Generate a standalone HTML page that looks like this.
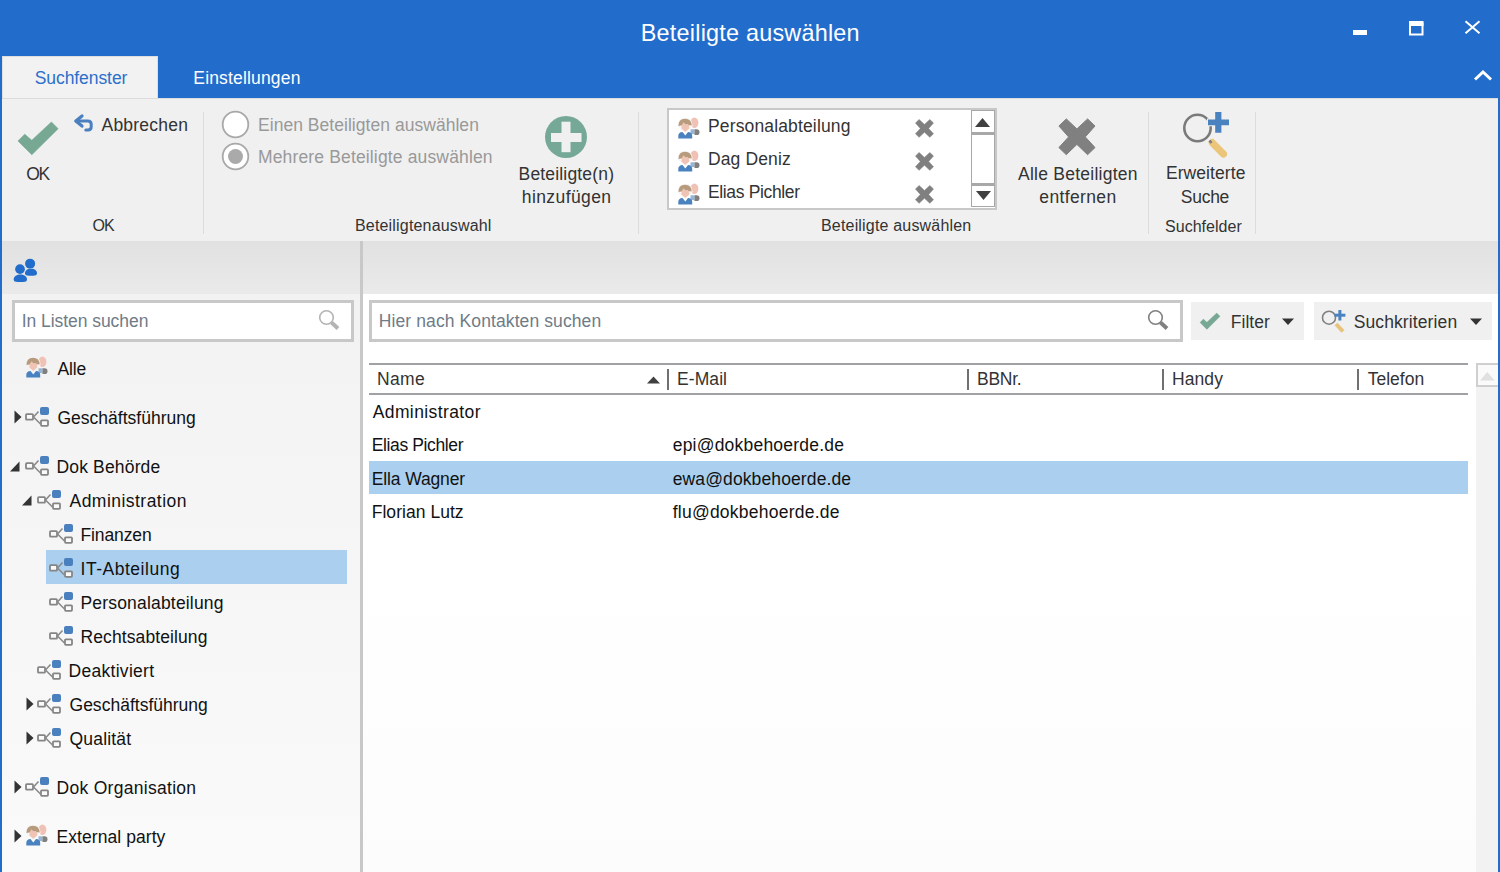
<!DOCTYPE html>
<html><head><meta charset="utf-8"><style>
html,body{margin:0;padding:0;}
body{width:1500px;height:872px;overflow:hidden;position:relative;background:#fff;font-family:"Liberation Sans",sans-serif;}
.t{position:absolute;white-space:nowrap;line-height:20px;}
svg{overflow:visible}
</style></head><body>
<div style="position:absolute;left:0px;top:0px;width:1500px;height:98px;background:#226dcc"></div>
<div class="t" style="left:640.80px;top:22.9px;font-size:23.4px;color:#fff;letter-spacing:0.221px;">Beteiligte auswählen</div>
<div style="position:absolute;left:1353px;top:30px;width:14px;height:5px;background:#fff"></div>
<svg style="position:absolute;left:1409px;top:21px" width="14.5" height="14.5" viewBox="0 0 14.5 14.5"><rect x="1" y="2.5" width="12.5" height="11" fill="none" stroke="#fff" stroke-width="2"/><rect x="0" y="0" width="14.5" height="5" fill="#fff"/></svg>
<svg style="position:absolute;left:1464px;top:20px" width="17" height="15" viewBox="0 0 17 15"><path d="M1.5 1.2 L15.5 13.2 M15.5 1.2 L1.5 13.2" stroke="#fff" stroke-width="2"/></svg>
<svg style="position:absolute;left:1473px;top:69px" width="20" height="13" viewBox="0 0 20 13"><path d="M2 10.5 L10 3 L18 10.5" fill="none" stroke="#fff" stroke-width="3"/></svg>
<div style="position:absolute;left:2px;top:56px;width:156px;height:42px;background:#f2f2f2;box-sizing:border-box;border:1.5px solid #dedede;border-bottom:none"></div>
<div class="t" style="left:34.70px;top:67.6px;font-size:17.5px;color:#2b6fcb;letter-spacing:-0.070px;">Suchfenster</div>
<div class="t" style="left:193.30px;top:67.9px;font-size:17.5px;color:#fff;letter-spacing:0.167px;">Einstellungen</div>
<div style="position:absolute;left:2px;top:98px;width:1496px;height:143px;background:#f0f0f0;box-sizing:border-box;border-top:1.5px solid #dcdcdc"></div>
<div style="position:absolute;left:203px;top:112px;width:1px;height:122px;background:#dcdcdc"></div>
<div style="position:absolute;left:638px;top:112px;width:1px;height:122px;background:#dcdcdc"></div>
<div style="position:absolute;left:1148px;top:112px;width:1px;height:122px;background:#dcdcdc"></div>
<div style="position:absolute;left:1255px;top:112px;width:1px;height:122px;background:#dcdcdc"></div>
<svg style="position:absolute;left:8px;top:111.5px" width="56" height="48" viewBox="0 0 56 48"><g transform="scale(2)"><polygon points="4.98,14.47 8.36,11.09 11.9,14.15 21.7,4.98 25.08,8.36 11.9,21.38" fill="#76a894" stroke="#76a894" stroke-width="0.3" stroke-linejoin="round"/></g></svg>
<div class="t" style="left:26.20px;top:163.9px;font-size:17.5px;color:#333;letter-spacing:-1.300px;">OK</div>
<svg style="position:absolute;left:70px;top:110px" width="26" height="24" viewBox="0 0 26 24"><path d="M6 11 H17.8 Q21.2 11 21.2 14.2 V16.8 Q21.2 20 18 20 H15.8" fill="none" stroke="#4a7fc0" stroke-width="3" stroke-linecap="round"/><path d="M12 5.9 L5.9 11 L12 16.1" fill="none" stroke="#4a7fc0" stroke-width="3.2" stroke-linecap="round" stroke-linejoin="round"/></svg>
<div class="t" style="left:101.50px;top:114.9px;font-size:17.5px;color:#333;letter-spacing:0.225px;">Abbrechen</div>
<div class="t" style="left:92.40px;top:216.2px;font-size:16px;color:#333;letter-spacing:-0.900px;">OK</div>
<svg style="position:absolute;left:221px;top:110px" width="29" height="29" viewBox="0 0 29 29"><circle cx="14.5" cy="14.5" r="12.8" fill="#fff" stroke="#a8a8a8" stroke-width="1.8"/></svg>
<svg style="position:absolute;left:221px;top:142px" width="29" height="29" viewBox="0 0 29 29"><circle cx="14.5" cy="14.5" r="12.8" fill="#fff" stroke="#a8a8a8" stroke-width="1.8"/><circle cx="14.5" cy="14.5" r="7.5" fill="#aaaaaa"/></svg>
<div class="t" style="left:258.00px;top:114.9px;font-size:17.5px;color:#999;letter-spacing:0.038px;">Einen Beteiligten auswählen</div>
<div class="t" style="left:258.00px;top:146.9px;font-size:17.5px;color:#999;letter-spacing:0.148px;">Mehrere Beteiligte auswählen</div>
<div class="t" style="left:355.00px;top:216.2px;font-size:16px;color:#333;letter-spacing:0.176px;">Beteiligtenauswahl</div>
<svg style="position:absolute;left:545px;top:116px" width="42" height="42" viewBox="0 0 42 42"><circle cx="21" cy="21" r="21" fill="#76a898"/><rect x="16.5" y="5.7" width="9" height="30.5" fill="#f0f0f0"/><rect x="6" y="17" width="30.5" height="9" fill="#f0f0f0"/></svg>
<div class="t" style="left:518.60px;top:163.7px;font-size:17.5px;color:#333;letter-spacing:0.167px;">Beteiligte(n)</div>
<div class="t" style="left:521.80px;top:187.4px;font-size:17.5px;color:#333;letter-spacing:0.400px;">hinzufügen</div>
<div style="position:absolute;left:667px;top:108px;width:330px;height:102px;background:#fff;box-sizing:border-box;border:2px solid #c8c8c8"></div>
<svg style="position:absolute;left:674px;top:113px" width="28" height="28" viewBox="0 0 28 28"><ellipse cx="20.4" cy="9.7" rx="4" ry="5.2" fill="#f0c2b6"/><path d="M16.5 16.3 h4 v4.8 h-4z" fill="#94b4d8"/><path d="M20.5 16.3 h2 a3 2.85 0 0 1 0 5.7 h-2z" fill="#7f7f7f"/><path d="M4.5 13 Q4.5 5.5 11 5.5 Q17.8 5.5 17.8 12.8 L17.8 13 L15 15.5 L11.3 18.8 L7.5 15.5 L4.5 13z" fill="none" stroke="#f4f4f4" stroke-width="1.6"/><path d="M4.3 25.5 V23 Q4.3 19.3 8.5 19 L11.3 22.5 L14 19 Q18.2 19.3 18.2 23 V25.5z" fill="#4a82c0"/><path d="M7.5 12 L9.5 9.5 L11.5 11.5 L13 11 L15.2 12.3 L15.2 15.5 L11.3 18.8 L7.4 15.5z" fill="#f0c4b4"/><path d="M4.5 13 Q4.5 5.8 11 5.8 Q17.6 5.8 17.6 12.6 L15.2 12.3 L13 11 L11.5 11.5 L9.5 9.5 L7.5 12.5z" fill="#b89a7c"/></svg>
<div class="t" style="left:708.00px;top:115.9px;font-size:17.5px;color:#333;letter-spacing:0.144px;">Personalabteilung</div>
<svg style="position:absolute;left:911.5px;top:115.5px" width="25" height="25" viewBox="0 0 25 25"><g transform="scale(0.5)"><polygon points="14.3,6.9 6.9,14.0 16.6,24.9 6.9,35.6 14.3,42.7 24.9,32.4 35.6,42.7 43,35.6 33.3,24.9 43,14.0 35.6,6.9 24.9,16.9" fill="#808080" stroke="#808080" stroke-width="1" stroke-linejoin="round"/></g></svg>
<svg style="position:absolute;left:674px;top:146px" width="28" height="28" viewBox="0 0 28 28"><ellipse cx="20.4" cy="9.7" rx="4" ry="5.2" fill="#f0c2b6"/><path d="M16.5 16.3 h4 v4.8 h-4z" fill="#94b4d8"/><path d="M20.5 16.3 h2 a3 2.85 0 0 1 0 5.7 h-2z" fill="#7f7f7f"/><path d="M4.5 13 Q4.5 5.5 11 5.5 Q17.8 5.5 17.8 12.8 L17.8 13 L15 15.5 L11.3 18.8 L7.5 15.5 L4.5 13z" fill="none" stroke="#f4f4f4" stroke-width="1.6"/><path d="M4.3 25.5 V23 Q4.3 19.3 8.5 19 L11.3 22.5 L14 19 Q18.2 19.3 18.2 23 V25.5z" fill="#4a82c0"/><path d="M7.5 12 L9.5 9.5 L11.5 11.5 L13 11 L15.2 12.3 L15.2 15.5 L11.3 18.8 L7.4 15.5z" fill="#f0c4b4"/><path d="M4.5 13 Q4.5 5.8 11 5.8 Q17.6 5.8 17.6 12.6 L15.2 12.3 L13 11 L11.5 11.5 L9.5 9.5 L7.5 12.5z" fill="#b89a7c"/></svg>
<div class="t" style="left:708.00px;top:148.9px;font-size:17.5px;color:#333;letter-spacing:0.125px;">Dag Deniz</div>
<svg style="position:absolute;left:911.5px;top:148.5px" width="25" height="25" viewBox="0 0 25 25"><g transform="scale(0.5)"><polygon points="14.3,6.9 6.9,14.0 16.6,24.9 6.9,35.6 14.3,42.7 24.9,32.4 35.6,42.7 43,35.6 33.3,24.9 43,14.0 35.6,6.9 24.9,16.9" fill="#808080" stroke="#808080" stroke-width="1" stroke-linejoin="round"/></g></svg>
<svg style="position:absolute;left:674px;top:179px" width="28" height="28" viewBox="0 0 28 28"><ellipse cx="20.4" cy="9.7" rx="4" ry="5.2" fill="#f0c2b6"/><path d="M16.5 16.3 h4 v4.8 h-4z" fill="#94b4d8"/><path d="M20.5 16.3 h2 a3 2.85 0 0 1 0 5.7 h-2z" fill="#7f7f7f"/><path d="M4.5 13 Q4.5 5.5 11 5.5 Q17.8 5.5 17.8 12.8 L17.8 13 L15 15.5 L11.3 18.8 L7.5 15.5 L4.5 13z" fill="none" stroke="#f4f4f4" stroke-width="1.6"/><path d="M4.3 25.5 V23 Q4.3 19.3 8.5 19 L11.3 22.5 L14 19 Q18.2 19.3 18.2 23 V25.5z" fill="#4a82c0"/><path d="M7.5 12 L9.5 9.5 L11.5 11.5 L13 11 L15.2 12.3 L15.2 15.5 L11.3 18.8 L7.4 15.5z" fill="#f0c4b4"/><path d="M4.5 13 Q4.5 5.8 11 5.8 Q17.6 5.8 17.6 12.6 L15.2 12.3 L13 11 L11.5 11.5 L9.5 9.5 L7.5 12.5z" fill="#b89a7c"/></svg>
<div class="t" style="left:708.00px;top:181.9px;font-size:17.5px;color:#333;letter-spacing:-0.358px;">Elias Pichler</div>
<svg style="position:absolute;left:911.5px;top:181.5px" width="25" height="25" viewBox="0 0 25 25"><g transform="scale(0.5)"><polygon points="14.3,6.9 6.9,14.0 16.6,24.9 6.9,35.6 14.3,42.7 24.9,32.4 35.6,42.7 43,35.6 33.3,24.9 43,14.0 35.6,6.9 24.9,16.9" fill="#808080" stroke="#808080" stroke-width="1" stroke-linejoin="round"/></g></svg>
<div style="position:absolute;left:971px;top:110px;width:24px;height:24px;background:#fff;box-sizing:border-box;border:1px solid #a8a8a8;border-bottom-width:2px"></div>
<div style="position:absolute;left:971px;top:134px;width:24px;height:50px;background:#fff;box-sizing:border-box;border:1px solid #a8a8a8"></div>
<div style="position:absolute;left:971px;top:184px;width:24px;height:23px;background:#fff;box-sizing:border-box;border:1px solid #a8a8a8;border-top-width:2px"></div>
<svg style="position:absolute;left:975px;top:117px" width="16" height="11" viewBox="0 0 16 11"><path d="M0 10 L7.5 1 L15 10z" fill="#404040"/></svg>
<svg style="position:absolute;left:976px;top:191px" width="16" height="10" viewBox="0 0 16 10"><path d="M0 0 L15 0 L7.5 9z" fill="#404040"/></svg>
<div class="t" style="left:821.00px;top:216.2px;font-size:16px;color:#333;letter-spacing:0.179px;">Beteiligte auswählen</div>
<svg style="position:absolute;left:1052px;top:112px" width="50" height="50" viewBox="0 0 50 50"><polygon points="14.3,6.9 6.9,14.0 16.6,24.9 6.9,35.6 14.3,42.7 24.9,32.4 35.6,42.7 43,35.6 33.3,24.9 43,14.0 35.6,6.9 24.9,16.9" fill="#808080" stroke="#808080" stroke-width="1" stroke-linejoin="round"/></svg>
<div class="t" style="left:1018.00px;top:163.7px;font-size:17.5px;color:#333;letter-spacing:0.253px;">Alle Beteiligten</div>
<div class="t" style="left:1039.30px;top:187.4px;font-size:17.5px;color:#333;letter-spacing:0.363px;">entfernen</div>
<svg style="position:absolute;left:1180px;top:110px" width="52" height="50" viewBox="0 0 52 50"><circle cx="17.5" cy="18" r="13.2" fill="none" stroke="#7a7a7a" stroke-width="2.6"/><path d="M32.3 32.7 L43.4 44" stroke="#ebc67a" stroke-width="7.3" stroke-linecap="round"/><path d="M29.5 30.5 L31.5 33" stroke="#7a7a7a" stroke-width="2.5"/><path d="M35.2 1.9 h6.2 v7.5 h7.6 v5.9 h-7.6 v7.5 h-6.2 v-7.5 h-7.2 v-5.9 h7.2z" fill="#4a82c0" stroke="#f0f0f0" stroke-width="2" paint-order="stroke"/></svg>
<div class="t" style="left:1165.90px;top:162.6px;font-size:17.5px;color:#333;letter-spacing:0.089px;">Erweiterte</div>
<div class="t" style="left:1180.80px;top:186.6px;font-size:17.5px;color:#333;letter-spacing:-0.275px;">Suche</div>
<div class="t" style="left:1165.00px;top:216.5px;font-size:16px;color:#333;letter-spacing:0.033px;">Suchfelder</div>
<div style="position:absolute;left:2px;top:241px;width:358px;height:53px;background:linear-gradient(#e1e1e1,#eaeaea)"></div>
<div style="position:absolute;left:2px;top:294px;width:358px;height:578px;background:linear-gradient(#f2f2f2,#fafafa)"></div>
<div style="position:absolute;left:360px;top:241px;width:3px;height:631px;background:#c8c8c8"></div>
<div style="position:absolute;left:363px;top:241px;width:1135px;height:53px;background:linear-gradient(#e1e1e1,#eaeaea)"></div>
<div style="position:absolute;left:363px;top:294px;width:1135px;height:578px;background:linear-gradient(#fff 40%,#fcfcfc)"></div>
<div style="position:absolute;left:0px;top:98px;width:2px;height:774px;background:#226dcc"></div>
<div style="position:absolute;left:1498px;top:98px;width:2px;height:774px;background:#226dcc"></div>
<svg style="position:absolute;left:13px;top:258px" width="28" height="28" viewBox="0 0 28 28"><path d="M12 15.3 C12 8.9 24 8.9 24 15.3 Q24 17.8 20 17.8 H16 Q12 17.8 12 15.3Z" fill="#226dcc"/><circle cx="17.1" cy="5.65" r="5" fill="#226dcc" stroke="#e4e4e4" stroke-width="1" paint-order="stroke"/><circle cx="7" cy="11.15" r="4.85" fill="#226dcc" stroke="#e4e4e4" stroke-width="1.2" paint-order="stroke"/><path d="M0.7 21.4 C0.7 15.0 14 15.0 14 21.4 Q14 23.9 10 23.9 H4.7 Q0.7 23.9 0.7 21.4Z" fill="#226dcc" stroke="#e5e5e5" stroke-width="1.2" paint-order="stroke"/></svg>
<div style="position:absolute;left:12px;top:300px;width:342px;height:42px;background:#fff;box-sizing:border-box;border:3px solid #c8c8c8"></div>
<div class="t" style="left:21.70px;top:310.9px;font-size:17.5px;color:#6f7b87;letter-spacing:-0.047px;">In Listen suchen</div>
<svg style="position:absolute;left:318px;top:309px" width="24" height="24" viewBox="0 0 24 24"><circle cx="8.5" cy="8.5" r="6.8" fill="none" stroke="#b4b4b4" stroke-width="1.6"/><path d="M13.5 13.5 L20 19.5" stroke="#b4b4b4" stroke-width="4"/></svg>
<div style="position:absolute;left:46px;top:550px;width:301px;height:34px;background:#aacfef"></div>
<svg style="position:absolute;left:22px;top:352.4px" width="28" height="28" viewBox="0 0 28 28"><ellipse cx="20.4" cy="9.7" rx="4" ry="5.2" fill="#f0c2b6"/><path d="M16.5 16.3 h4 v4.8 h-4z" fill="#94b4d8"/><path d="M20.5 16.3 h2 a3 2.85 0 0 1 0 5.7 h-2z" fill="#7f7f7f"/><path d="M4.5 13 Q4.5 5.5 11 5.5 Q17.8 5.5 17.8 12.8 L17.8 13 L15 15.5 L11.3 18.8 L7.5 15.5 L4.5 13z" fill="none" stroke="#f4f4f4" stroke-width="1.6"/><path d="M4.3 25.5 V23 Q4.3 19.3 8.5 19 L11.3 22.5 L14 19 Q18.2 19.3 18.2 23 V25.5z" fill="#4a82c0"/><path d="M7.5 12 L9.5 9.5 L11.5 11.5 L13 11 L15.2 12.3 L15.2 15.5 L11.3 18.8 L7.4 15.5z" fill="#f0c4b4"/><path d="M4.5 13 Q4.5 5.8 11 5.8 Q17.6 5.8 17.6 12.6 L15.2 12.3 L13 11 L11.5 11.5 L9.5 9.5 L7.5 12.5z" fill="#b89a7c"/></svg>
<div class="t" style="left:57.50px;top:358.9px;font-size:17.5px;color:#111;letter-spacing:-0.133px;">Alle</div>
<svg style="position:absolute;left:25px;top:407px" width="25" height="21" viewBox="0 0 25 21"><rect x="15" y="0" width="9" height="8" rx="2" fill="#4a80bd"/><rect x="1" y="7.2" width="7" height="5.5" rx="0.8" fill="#fafafa" stroke="#858585" stroke-width="1.8"/><rect x="16" y="13.3" width="7" height="5.6" rx="0.8" fill="#fafafa" stroke="#858585" stroke-width="1.8"/><path d="M8.5 10 L13.5 4.5 M8.5 10 L15.5 17" stroke="#8a8a8a" stroke-width="1.6"/></svg>
<svg style="position:absolute;left:13.5px;top:410px" width="8" height="14" viewBox="0 0 8 14"><path d="M0.5 0.5 L7.5 7 L0.5 13.5z" fill="#333"/></svg>
<div class="t" style="left:57.50px;top:407.9px;font-size:17.5px;color:#111;letter-spacing:0.007px;">Geschäftsführung</div>
<svg style="position:absolute;left:25px;top:456px" width="25" height="21" viewBox="0 0 25 21"><rect x="15" y="0" width="9" height="8" rx="2" fill="#4a80bd"/><rect x="1" y="7.2" width="7" height="5.5" rx="0.8" fill="#fafafa" stroke="#858585" stroke-width="1.8"/><rect x="16" y="13.3" width="7" height="5.6" rx="0.8" fill="#fafafa" stroke="#858585" stroke-width="1.8"/><path d="M8.5 10 L13.5 4.5 M8.5 10 L15.5 17" stroke="#8a8a8a" stroke-width="1.6"/></svg>
<svg style="position:absolute;left:10px;top:460.5px" width="10" height="11" viewBox="0 0 10 11"><path d="M9.5 0.5 L9.5 10.5 L0 10.5z" fill="#333"/></svg>
<div class="t" style="left:56.50px;top:456.9px;font-size:17.5px;color:#111;letter-spacing:0.160px;">Dok Behörde</div>
<svg style="position:absolute;left:37px;top:490px" width="25" height="21" viewBox="0 0 25 21"><rect x="15" y="0" width="9" height="8" rx="2" fill="#4a80bd"/><rect x="1" y="7.2" width="7" height="5.5" rx="0.8" fill="#fafafa" stroke="#858585" stroke-width="1.8"/><rect x="16" y="13.3" width="7" height="5.6" rx="0.8" fill="#fafafa" stroke="#858585" stroke-width="1.8"/><path d="M8.5 10 L13.5 4.5 M8.5 10 L15.5 17" stroke="#8a8a8a" stroke-width="1.6"/></svg>
<svg style="position:absolute;left:22px;top:494.5px" width="10" height="11" viewBox="0 0 10 11"><path d="M9.5 0.5 L9.5 10.5 L0 10.5z" fill="#333"/></svg>
<div class="t" style="left:69.50px;top:490.9px;font-size:17.5px;color:#111;letter-spacing:0.469px;">Administration</div>
<svg style="position:absolute;left:49px;top:524px" width="25" height="21" viewBox="0 0 25 21"><rect x="15" y="0" width="9" height="8" rx="2" fill="#4a80bd"/><rect x="1" y="7.2" width="7" height="5.5" rx="0.8" fill="#fafafa" stroke="#858585" stroke-width="1.8"/><rect x="16" y="13.3" width="7" height="5.6" rx="0.8" fill="#fafafa" stroke="#858585" stroke-width="1.8"/><path d="M8.5 10 L13.5 4.5 M8.5 10 L15.5 17" stroke="#8a8a8a" stroke-width="1.6"/></svg>
<div class="t" style="left:80.50px;top:524.9px;font-size:17.5px;color:#111;letter-spacing:-0.114px;">Finanzen</div>
<svg style="position:absolute;left:49px;top:558px" width="25" height="21" viewBox="0 0 25 21"><rect x="15" y="0" width="9" height="8" rx="2" fill="#4a80bd"/><rect x="1" y="7.2" width="7" height="5.5" rx="0.8" fill="#fafafa" stroke="#858585" stroke-width="1.8"/><rect x="16" y="13.3" width="7" height="5.6" rx="0.8" fill="#fafafa" stroke="#858585" stroke-width="1.8"/><path d="M8.5 10 L13.5 4.5 M8.5 10 L15.5 17" stroke="#8a8a8a" stroke-width="1.6"/></svg>
<div class="t" style="left:80.50px;top:558.9px;font-size:17.5px;color:#111;letter-spacing:0.527px;">IT-Abteilung</div>
<svg style="position:absolute;left:49px;top:592px" width="25" height="21" viewBox="0 0 25 21"><rect x="15" y="0" width="9" height="8" rx="2" fill="#4a80bd"/><rect x="1" y="7.2" width="7" height="5.5" rx="0.8" fill="#fafafa" stroke="#858585" stroke-width="1.8"/><rect x="16" y="13.3" width="7" height="5.6" rx="0.8" fill="#fafafa" stroke="#858585" stroke-width="1.8"/><path d="M8.5 10 L13.5 4.5 M8.5 10 L15.5 17" stroke="#8a8a8a" stroke-width="1.6"/></svg>
<div class="t" style="left:80.50px;top:592.9px;font-size:17.5px;color:#111;letter-spacing:0.181px;">Personalabteilung</div>
<svg style="position:absolute;left:49px;top:626px" width="25" height="21" viewBox="0 0 25 21"><rect x="15" y="0" width="9" height="8" rx="2" fill="#4a80bd"/><rect x="1" y="7.2" width="7" height="5.5" rx="0.8" fill="#fafafa" stroke="#858585" stroke-width="1.8"/><rect x="16" y="13.3" width="7" height="5.6" rx="0.8" fill="#fafafa" stroke="#858585" stroke-width="1.8"/><path d="M8.5 10 L13.5 4.5 M8.5 10 L15.5 17" stroke="#8a8a8a" stroke-width="1.6"/></svg>
<div class="t" style="left:80.50px;top:626.9px;font-size:17.5px;color:#111;letter-spacing:0.100px;">Rechtsabteilung</div>
<svg style="position:absolute;left:37px;top:660px" width="25" height="21" viewBox="0 0 25 21"><rect x="15" y="0" width="9" height="8" rx="2" fill="#4a80bd"/><rect x="1" y="7.2" width="7" height="5.5" rx="0.8" fill="#fafafa" stroke="#858585" stroke-width="1.8"/><rect x="16" y="13.3" width="7" height="5.6" rx="0.8" fill="#fafafa" stroke="#858585" stroke-width="1.8"/><path d="M8.5 10 L13.5 4.5 M8.5 10 L15.5 17" stroke="#8a8a8a" stroke-width="1.6"/></svg>
<div class="t" style="left:68.50px;top:660.9px;font-size:17.5px;color:#111;letter-spacing:0.290px;">Deaktiviert</div>
<svg style="position:absolute;left:37px;top:694px" width="25" height="21" viewBox="0 0 25 21"><rect x="15" y="0" width="9" height="8" rx="2" fill="#4a80bd"/><rect x="1" y="7.2" width="7" height="5.5" rx="0.8" fill="#fafafa" stroke="#858585" stroke-width="1.8"/><rect x="16" y="13.3" width="7" height="5.6" rx="0.8" fill="#fafafa" stroke="#858585" stroke-width="1.8"/><path d="M8.5 10 L13.5 4.5 M8.5 10 L15.5 17" stroke="#8a8a8a" stroke-width="1.6"/></svg>
<svg style="position:absolute;left:25.5px;top:697px" width="8" height="14" viewBox="0 0 8 14"><path d="M0.5 0.5 L7.5 7 L0.5 13.5z" fill="#333"/></svg>
<div class="t" style="left:69.50px;top:694.9px;font-size:17.5px;color:#111;letter-spacing:0.013px;">Geschäftsführung</div>
<svg style="position:absolute;left:37px;top:728px" width="25" height="21" viewBox="0 0 25 21"><rect x="15" y="0" width="9" height="8" rx="2" fill="#4a80bd"/><rect x="1" y="7.2" width="7" height="5.5" rx="0.8" fill="#fafafa" stroke="#858585" stroke-width="1.8"/><rect x="16" y="13.3" width="7" height="5.6" rx="0.8" fill="#fafafa" stroke="#858585" stroke-width="1.8"/><path d="M8.5 10 L13.5 4.5 M8.5 10 L15.5 17" stroke="#8a8a8a" stroke-width="1.6"/></svg>
<svg style="position:absolute;left:25.5px;top:731px" width="8" height="14" viewBox="0 0 8 14"><path d="M0.5 0.5 L7.5 7 L0.5 13.5z" fill="#333"/></svg>
<div class="t" style="left:69.50px;top:728.9px;font-size:17.5px;color:#111;letter-spacing:0.186px;">Qualität</div>
<svg style="position:absolute;left:25px;top:777px" width="25" height="21" viewBox="0 0 25 21"><rect x="15" y="0" width="9" height="8" rx="2" fill="#4a80bd"/><rect x="1" y="7.2" width="7" height="5.5" rx="0.8" fill="#fafafa" stroke="#858585" stroke-width="1.8"/><rect x="16" y="13.3" width="7" height="5.6" rx="0.8" fill="#fafafa" stroke="#858585" stroke-width="1.8"/><path d="M8.5 10 L13.5 4.5 M8.5 10 L15.5 17" stroke="#8a8a8a" stroke-width="1.6"/></svg>
<svg style="position:absolute;left:13.5px;top:780px" width="8" height="14" viewBox="0 0 8 14"><path d="M0.5 0.5 L7.5 7 L0.5 13.5z" fill="#333"/></svg>
<div class="t" style="left:56.50px;top:777.9px;font-size:17.5px;color:#111;letter-spacing:0.293px;">Dok Organisation</div>
<svg style="position:absolute;left:22px;top:820.4px" width="28" height="28" viewBox="0 0 28 28"><ellipse cx="20.4" cy="9.7" rx="4" ry="5.2" fill="#f0c2b6"/><path d="M16.5 16.3 h4 v4.8 h-4z" fill="#94b4d8"/><path d="M20.5 16.3 h2 a3 2.85 0 0 1 0 5.7 h-2z" fill="#7f7f7f"/><path d="M4.5 13 Q4.5 5.5 11 5.5 Q17.8 5.5 17.8 12.8 L17.8 13 L15 15.5 L11.3 18.8 L7.5 15.5 L4.5 13z" fill="none" stroke="#f4f4f4" stroke-width="1.6"/><path d="M4.3 25.5 V23 Q4.3 19.3 8.5 19 L11.3 22.5 L14 19 Q18.2 19.3 18.2 23 V25.5z" fill="#4a82c0"/><path d="M7.5 12 L9.5 9.5 L11.5 11.5 L13 11 L15.2 12.3 L15.2 15.5 L11.3 18.8 L7.4 15.5z" fill="#f0c4b4"/><path d="M4.5 13 Q4.5 5.8 11 5.8 Q17.6 5.8 17.6 12.6 L15.2 12.3 L13 11 L11.5 11.5 L9.5 9.5 L7.5 12.5z" fill="#b89a7c"/></svg>
<svg style="position:absolute;left:13.5px;top:829px" width="8" height="14" viewBox="0 0 8 14"><path d="M0.5 0.5 L7.5 7 L0.5 13.5z" fill="#333"/></svg>
<div class="t" style="left:56.50px;top:826.9px;font-size:17.5px;color:#111;letter-spacing:0.069px;">External party</div>
<div style="position:absolute;left:369px;top:300px;width:814px;height:42px;background:#fff;box-sizing:border-box;border:3px solid #c8c8c8"></div>
<div class="t" style="left:378.80px;top:311.3px;font-size:17.5px;color:#6f7b87;letter-spacing:0.100px;">Hier nach Kontakten suchen</div>
<svg style="position:absolute;left:1147px;top:309px" width="24" height="24" viewBox="0 0 24 24"><circle cx="8.5" cy="8.5" r="6.8" fill="none" stroke="#808080" stroke-width="1.6"/><path d="M13.5 13.5 L20 19.5" stroke="#808080" stroke-width="4"/></svg>
<div style="position:absolute;left:1191px;top:302px;width:113px;height:38px;background:#f0f0f0"></div>
<svg style="position:absolute;left:1195px;top:308px" width="28" height="26" viewBox="0 0 28 26"><polygon points="4.98,14.47 8.36,11.09 11.9,14.15 21.7,4.98 25.08,8.36 11.9,21.38" fill="#76a894" stroke="#76a894" stroke-width="0.3" stroke-linejoin="round"/></svg>
<div class="t" style="left:1230.70px;top:311.9px;font-size:17.5px;color:#333;letter-spacing:0.060px;">Filter</div>
<svg style="position:absolute;left:1282px;top:318px" width="13" height="8" viewBox="0 0 13 8"><path d="M0 0.5 H12 L6 7z" fill="#333"/></svg>
<div style="position:absolute;left:1314px;top:302px;width:178px;height:38px;background:#f0f0f0"></div>
<svg style="position:absolute;left:1320px;top:307.5px" width="28" height="26" viewBox="0 0 28 26"><circle cx="9" cy="9.7" r="6.5" fill="none" stroke="#808080" stroke-width="1.6"/><path d="M16 16 L23 23.5" stroke="#e8c47a" stroke-width="4"/><rect x="18.4" y="2" width="3" height="10.5" fill="#4a82c0"/><rect x="14.4" y="5.7" width="11" height="3" fill="#4a82c0"/></svg>
<div class="t" style="left:1353.70px;top:311.9px;font-size:17.5px;color:#333;letter-spacing:0.108px;">Suchkriterien</div>
<svg style="position:absolute;left:1470px;top:318px" width="13" height="8" viewBox="0 0 13 8"><path d="M0 0.5 H12 L6 7z" fill="#333"/></svg>
<div style="position:absolute;left:369px;top:363px;width:1099px;height:2px;background:#a0a0a5"></div>
<div style="position:absolute;left:369px;top:393px;width:1099px;height:2px;background:#a0a0a5"></div>
<div class="t" style="left:376.90px;top:368.6px;font-size:17.5px;color:#333;letter-spacing:0.367px;">Name</div>
<svg style="position:absolute;left:647px;top:376px" width="14" height="8" viewBox="0 0 14 8"><path d="M0 7.5 L6.5 0.5 L13 7.5z" fill="#404040"/></svg>
<div style="position:absolute;left:667px;top:369px;width:2px;height:21px;background:#707070"></div>
<div class="t" style="left:677.00px;top:368.7px;font-size:17.5px;color:#333;letter-spacing:0.080px;">E-Mail</div>
<div style="position:absolute;left:967px;top:369px;width:2px;height:21px;background:#707070"></div>
<div class="t" style="left:977.00px;top:368.7px;font-size:17.5px;color:#333;letter-spacing:-0.250px;">BBNr.</div>
<div style="position:absolute;left:1162px;top:369px;width:2px;height:21px;background:#707070"></div>
<div class="t" style="left:1172.00px;top:368.7px;font-size:17.5px;color:#333;letter-spacing:0.075px;">Handy</div>
<div style="position:absolute;left:1357px;top:369px;width:2px;height:21px;background:#707070"></div>
<div class="t" style="left:1367.70px;top:368.7px;font-size:17.5px;color:#333;letter-spacing:0.000px;">Telefon</div>
<div style="position:absolute;left:1476px;top:363px;width:22px;height:509px;background:#f2f2f2"></div>
<div style="position:absolute;left:1476px;top:363px;width:22px;height:24px;background:#fafafa;box-sizing:border-box;border:2px solid #cfcfcf;border-right:none"></div>
<svg style="position:absolute;left:1480px;top:370.5px" width="15" height="10" viewBox="0 0 15 10"><path d="M0 9.5 L7.3 1 L14.6 9.5z" fill="#e0e0e0"/></svg>
<div style="position:absolute;left:369px;top:461px;width:1099px;height:33px;background:#aacfef"></div>
<div class="t" style="left:372.70px;top:402.2px;font-size:17.5px;color:#111;letter-spacing:0.400px;">Administrator</div>
<div class="t" style="left:371.70px;top:435.4px;font-size:17.5px;color:#111;letter-spacing:-0.367px;">Elias Pichler</div>
<div class="t" style="left:672.70px;top:435.4px;font-size:17.5px;color:#111;letter-spacing:0.212px;">epi@dokbehoerde.de</div>
<div class="t" style="left:371.70px;top:468.6px;font-size:17.5px;color:#111;letter-spacing:-0.120px;">Ella Wagner</div>
<div class="t" style="left:672.70px;top:468.6px;font-size:17.5px;color:#111;letter-spacing:0.118px;">ewa@dokbehoerde.de</div>
<div class="t" style="left:371.70px;top:501.8px;font-size:17.5px;color:#111;letter-spacing:0.045px;">Florian Lutz</div>
<div class="t" style="left:672.70px;top:501.8px;font-size:17.5px;color:#111;letter-spacing:0.235px;">flu@dokbehoerde.de</div>
</body></html>
